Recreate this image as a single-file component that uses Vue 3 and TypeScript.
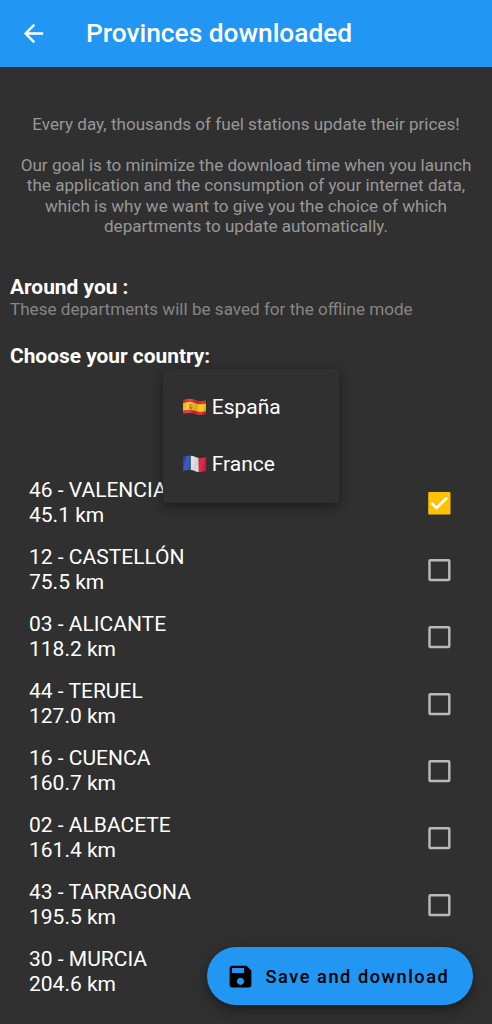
<script setup lang="ts">
import { ref } from 'vue'

interface Province {
  code: string
  name: string
  distance: string
  checked: boolean
}

const provinces = ref<Province[]>([
  { code: '46', name: 'VALENCIA', distance: '45.1 km', checked: true },
  { code: '12', name: 'CASTELLÓN', distance: '75.5 km', checked: false },
  { code: '03', name: 'ALICANTE', distance: '118.2 km', checked: false },
  { code: '44', name: 'TERUEL', distance: '127.0 km', checked: false },
  { code: '16', name: 'CUENCA', distance: '160.7 km', checked: false },
  { code: '02', name: 'ALBACETE', distance: '161.4 km', checked: false },
  { code: '43', name: 'TARRAGONA', distance: '195.5 km', checked: false },
  { code: '30', name: 'MURCIA', distance: '204.6 km', checked: false },
])
</script>

<template>
  <div class="screen">
    <header class="app-bar">
      <button class="back" aria-label="Back">
        <svg viewBox="0 0 24 24">
          <path d="M20 11H7.83l5.59-5.59L12 4l-8 8 8 8 1.41-1.41L7.83 13H20v-2z" fill="currentColor" />
        </svg>
      </button>
      <h1 class="title">Provinces downloaded</h1>
    </header>

    <main class="content">
      <section class="intro">
        <p>Every day, thousands of fuel stations update their prices!</p>
        <p>
          Our goal is to minimize the download time when you launch<br />
          the application and the consumption of your internet data,<br />
          which is why we want to give you the choice of which<br />
          departments to update automatically.
        </p>
      </section>

      <section class="around">
        <h2>Around you :</h2>
        <p>These departments will be saved for the offline mode</p>
      </section>

      <section class="country">
        <h2>Choose your country:</h2>
        <div class="menu">
          <div class="option">
            <svg class="flag" viewBox="0 0 24 18">
              <defs>
                <linearGradient id="wave-es" x1="0" x2="1" y1="0" y2="0.15">
                  <stop offset="0" stop-color="#000" stop-opacity="0.12" />
                  <stop offset="0.3" stop-color="#fff" stop-opacity="0.16" />
                  <stop offset="0.62" stop-color="#000" stop-opacity="0.16" />
                  <stop offset="0.85" stop-color="#fff" stop-opacity="0.08" />
                  <stop offset="1" stop-color="#000" stop-opacity="0.12" />
                </linearGradient>
              </defs>
              <path d="M0 1.9C4 .2 8 .2 12 1.7s8 1.7 12 .3V16c-4 1.6-8 1.5-12 .1s-8-1.6-12 .1Z" fill="#d8262c" />
              <path d="M0 5.1c4-1.7 8-1.7 12-.2s8 1.7 12 .3v7.6c-4 1.5-8 1.4-12 0s-8-1.6-12 .1Z" fill="#ffc813" />
              <path d="M6.2 6.2h3.3v3.5c0 2-3.3 2-3.3 0Z" fill="#c85b2d" />
              <path d="M7.5 7h2v1.7h-2z" fill="#f0b83d" />
              <path d="M0 1.9C4 .2 8 .2 12 1.7s8 1.7 12 .3V16c-4 1.6-8 1.5-12 .1s-8-1.6-12 .1Z" fill="url(#wave-es)" />
            </svg>
            <span>España</span>
          </div>
          <div class="option">
            <svg class="flag" viewBox="0 0 24 18">
              <defs>
                <linearGradient id="wave-fr" x1="0" x2="1" y1="0" y2="0.15">
                  <stop offset="0" stop-color="#000" stop-opacity="0.1" />
                  <stop offset="0.2" stop-color="#fff" stop-opacity="0.14" />
                  <stop offset="0.65" stop-color="#000" stop-opacity="0.15" />
                  <stop offset="0.85" stop-color="#fff" stop-opacity="0.06" />
                  <stop offset="1" stop-color="#000" stop-opacity="0.1" />
                </linearGradient>
              </defs>
              <path d="M0 1.9C2.7.8 5.3.4 8 .7v14.6c-2.7-.4-5.3 0-8 .9Z" fill="#1c47ad" />
              <path d="M8 .7c1.4.1 2.7.5 4 1s2.7.9 4 1.1v14.4c-1.3-.2-2.7-.6-4-1.1s-2.6-.8-4-.9Z" fill="#f4f4f4" />
              <path d="M16 2.8c2.7.4 5.3.1 8-.8V16c-2.7 1.1-5.3 1.5-8 1.2Z" fill="#e4193d" />
              <path d="M0 1.9C4 .2 8 .2 12 1.7s8 1.7 12 .3V16c-4 1.6-8 1.5-12 .1s-8-1.6-12 .1Z" fill="url(#wave-fr)" />
            </svg>
            <span>France</span>
          </div>
        </div>
      </section>

      <ul class="list">
        <li v-for="p in provinces" :key="p.code" class="row" @click="p.checked = !p.checked">
          <div class="label">
            <span>{{ p.code }} - {{ p.name }}</span>
            <span>{{ p.distance }}</span>
          </div>
          <svg class="check" viewBox="0 0 24 24">
            <template v-if="p.checked">
              <rect x="1.2" y="1.1" width="22.3" height="22.3" rx="1" fill="#ffc107" />
              <path d="M4.3 12 9.6 17 20 6.6" fill="none" stroke="#fff" stroke-width="2.6" />
            </template>
            <rect v-else x="2.5" y="2.2" width="19.8" height="19.8" rx="0.8" fill="none" stroke="#b9b9b9" stroke-width="2.4" />
          </svg>
        </li>
      </ul>
    </main>

    <button class="fab">
      <svg viewBox="0 0 24 24">
        <path
          d="M17 3H5c-1.11 0-2 .9-2 2v14c0 1.1.89 2 2 2h14c1.1 0 2-.9 2-2V7l-4-4zm-5 16c-1.66 0-3-1.34-3-3s1.34-3 3-3 3 1.34 3 3-1.34 3-3 3zm3-10H5V5h10v4z"
          fill="currentColor"
        />
      </svg>
      <span>Save and download</span>
    </button>
  </div>
</template>

<style>
body {
  background: #303030;
}
</style>

<style scoped>
.screen {
  position: relative;
  width: 492px;
  height: 1024px;
  overflow: hidden;
  background: #303030;
  color: #fff;
  font-family: Roboto, 'Liberation Sans', sans-serif;
}

.app-bar {
  display: flex;
  align-items: center;
  height: 67px;
  background: #2196f3;
}

button {
  border: 0;
  font-family: inherit;
}

.back {
  display: flex;
  margin-left: 19px;
  padding: 0;
  background: none;
  color: #fff;
}

.back svg {
  width: 29px;
  height: 29px;
}

.title {
  margin: 0 0 2px 38px;
  font-size: 26.3px;
  font-weight: 500;
  line-height: 32px;
}

.content {
  padding-top: 47px;
}

.intro {
  text-align: center;
  color: #989898;
  font-size: 17.1px;
  line-height: 20.4px;
}

.intro p {
  margin: 0 0 20.4px;
  white-space: nowrap;
}

h2 {
  margin: 0;
  font-size: 20.9px;
  font-weight: 700;
  line-height: 25px;
}

.around {
  margin: 39px 10px 0;
}

.around p {
  margin: -1px 0 0;
  color: #868686;
  font-size: 17.1px;
  line-height: 20.4px;
}

.country {
  position: relative;
  height: 126px;
  margin: 24px 10px 0;
}

.menu {
  position: absolute;
  z-index: 2;
  top: 25px;
  left: 153px;
  display: flex;
  flex-direction: column;
  width: 176px;
  height: 134px;
  box-sizing: border-box;
  padding: 10px 0 9px;
  border-radius: 2px;
  background: #303030;
  box-shadow: 0 4px 6px -1px rgba(0, 0, 0, 0.2), 0 5px 12px rgba(0, 0, 0, 0.14), 0 1px 14px rgba(0, 0, 0, 0.12);
}

.option {
  display: flex;
  align-items: center;
  height: 57px;
  padding-left: 19.6px;
  gap: 5.6px;
  font-size: 21px;
}

.flag {
  width: 23.6px;
  height: 18px;
}

.list {
  margin: 0;
  padding: 0;
  list-style: none;
}

.row {
  display: flex;
  align-items: center;
  justify-content: space-between;
  height: 67px;
  padding: 0 41px 0 29px;
}

.label {
  display: flex;
  flex-direction: column;
  padding-bottom: 0.4px;
  font-size: 21px;
  line-height: 25.6px;
}

.check {
  width: 24px;
  height: 24px;
}

.fab {
  position: absolute;
  z-index: 3;
  right: 19px;
  bottom: 19px;
  display: flex;
  align-items: center;
  gap: 10.4px;
  width: 266px;
  height: 58px;
  padding: 0 0 0 19.2px;
  border-radius: 29px;
  background: #2196f3;
  box-shadow: 0 4px 6px -1px rgba(0, 0, 0, 0.2), 0 7px 12px rgba(0, 0, 0, 0.14), 0 1px 20px rgba(0, 0, 0, 0.12);
  color: #000;
  font-size: 18.2px;
  font-weight: 500;
  letter-spacing: 1.53px;
  white-space: nowrap;
}

.fab svg {
  width: 29px;
  height: 29px;
}
</style>
